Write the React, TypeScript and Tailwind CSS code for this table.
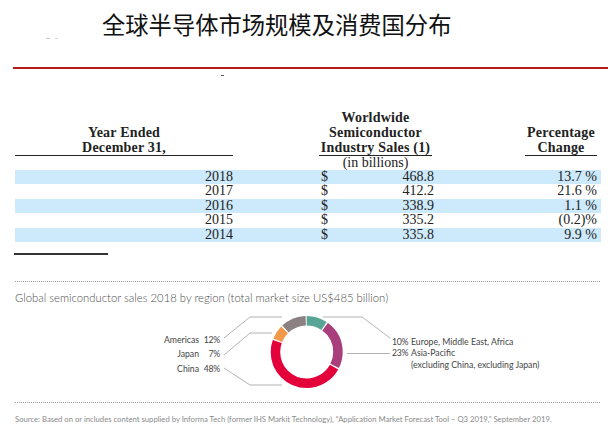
const rows = [
  { year: '2018', sales: '468.8', change: '13.7 %', shaded: true },
  { year: '2017', sales: '412.2', change: '21.6 %', shaded: false },
  { year: '2016', sales: '338.9', change: '1.1 %', shaded: true },
  { year: '2015', sales: '335.2', change: '(0.2)%', shaded: false },
  { year: '2014', sales: '335.8', change: '9.9 %', shaded: true },
];

// clockwise from 12 o'clock
const segments = [
  { pct: 10, color: '#58a596' },
  { pct: 23, color: '#a83e7c' },
  { pct: 48, color: '#e4003b' },
  { pct: 7, color: '#f2994b' },
  { pct: 12, color: '#8b8182' },
];

const Donut = () => {
  const cx = 86.7;
  const cy = 47;
  const r = 31.25;
  const c = 2 * Math.PI * r;
  let start = 0;

  return (
    <svg width="172" height="95" viewBox="0 0 172 95" className="shrink-0">
      <g fill="none" stroke="#b3b3b3" strokeWidth="1">
        <polyline points="4,33 30,12 62,12" />
        <polyline points="4,50 30,28 52,28" />
        <polyline points="4,63 30,80 62,80" />
        <polyline points="103,12 142,12 170,33" />
        <polyline points="127,48.5 170,48.5" />
      </g>
      <g transform={`rotate(-90 ${cx} ${cy})`}>
        {segments.map((s) => {
          const len = (s.pct / 100) * c;
          const el = (
            <circle
              key={s.color}
              cx={cx}
              cy={cy}
              r={r}
              fill="none"
              stroke={s.color}
              strokeWidth="9.5"
              strokeDasharray={`${len - 1.3} ${c - len + 1.3}`}
              strokeDashoffset={-start}
            />
          );
          start += len;
          return el;
        })}
      </g>
    </svg>
  );
};

const App = () => {
  return (
    <div className="w-[608px] h-[439px] bg-white overflow-hidden text-[#222]">
      {/* title */}
      <div className="h-[67px] flex items-start">
        <div className="w-[102px] pt-[38px] pl-[46px] flex gap-[5px]">
          <span className="block w-[4px] h-px bg-[#c8c8c8]" />
          <span className="block w-[3px] h-px bg-[#d8d8d8]" />
        </div>
        <h1 className="pt-[13px] text-[23.3px] leading-[23px] text-[#111] font-['Noto_Sans_CJK_SC',sans-serif] font-normal">
          全球半导体市场规模及消费国分布
        </h1>
      </div>
      <div className="ml-[13px] h-[1.5px] bg-[#b41c1c]" />
      <div className="ml-[221px] mt-[6px] w-[3px] h-px bg-[#555]" />

      {/* table */}
      <div className="ml-[15px] w-[586px] mt-[34.5px] font-['Liberation_Serif',serif] text-[14px]">
        <div className="flex items-end font-bold leading-[15px] tracking-[0.2px]">
          <div className="w-[218px] text-center border-b-[1.5px] border-[#222]">
            Year Ended
            <br />
            December 31,
          </div>
          <div className="ml-[86px] w-[113px] text-center border-b-[1.5px] border-[#222]">
            Worldwide
            <br />
            Semiconductor
            <br />
            Industry Sales (1)
          </div>
          <div className="ml-[93px] w-[72px] text-center border-b-[1.5px] border-[#222]">
            Percentage
            <br />
            Change
          </div>
        </div>
        <div className="flex h-[13.5px] leading-[13.5px]">
          <div className="ml-[304px] w-[113px] text-center">(in billions)</div>
        </div>
        {rows.map((row) => (
          <div
            key={row.year}
            className={`flex h-[14.5px] leading-[14.5px] ${row.shaded ? 'bg-[#cdeafc]' : 'bg-white'}`}
          >
            <div className="w-[218px] text-right">{row.year}</div>
            <div className="ml-[86px] w-[115px] pl-[2px] flex justify-between">
              <span>$</span>
              <span>{row.sales}</span>
            </div>
            <div className="ml-[91px] w-[72px] text-right">{row.change}</div>
          </div>
        ))}
      </div>
      <div className="ml-[14px] mt-[10.5px] w-[94px] h-[2px] bg-[#333]" />

      {/* chart */}
      <div className="ml-[15px] mt-[26.5px] w-[585px] border-t border-dotted border-[#9a9a9a]" />
      <div className="mt-[8.5px] pl-[15px] h-[14px] leading-[14px] text-[11.3px] font-['Lato',sans-serif] font-light text-[#4d4d4d] whitespace-nowrap">
        Global semiconductor sales 2018 by region (total market size US$485 billion)
      </div>
      <div className="flex h-[95px] font-['Lato',sans-serif] text-[8.7px] text-[#444]">
        <div className="w-[220px] pt-[28px] leading-[14.5px]">
          {[
            ['Americas', '12%'],
            ['Japan', '7%'],
            ['China', '48%'],
          ].map(([name, pct]) => (
            <div key={name} className="flex justify-end">
              <span>{name}</span>
              <span className="w-[21px] text-right tracking-[-0.3px]">{pct}</span>
            </div>
          ))}
        </div>
        <Donut />
        <div className="pt-[31px] leading-[11.5px] whitespace-nowrap">
          <div className="flex">
            <span className="w-[19px] tracking-[-0.3px]">10%</span>
            <span>Europe, Middle East, Africa</span>
          </div>
          <div className="flex">
            <span className="w-[19px] tracking-[-0.3px]">23%</span>
            <span>
              Asia-Pacific
              <br />
              (excluding China, excluding Japan)
            </span>
          </div>
        </div>
      </div>
      <div className="ml-[15px] mt-[2.5px] w-[585px] border-t border-dotted border-[#9a9a9a]" />
      <div className="mt-[11px] pl-[15px] h-[10px] leading-[10px] text-[7.7px] font-['Lato',sans-serif] text-[#8a8a8a] whitespace-nowrap">
        Source: Based on or includes content supplied by Informa Tech (former IHS Markit Technology), “Application Market Forecast Tool – Q3 2019,” September 2019.
      </div>
    </div>
  );
};

export default App;
